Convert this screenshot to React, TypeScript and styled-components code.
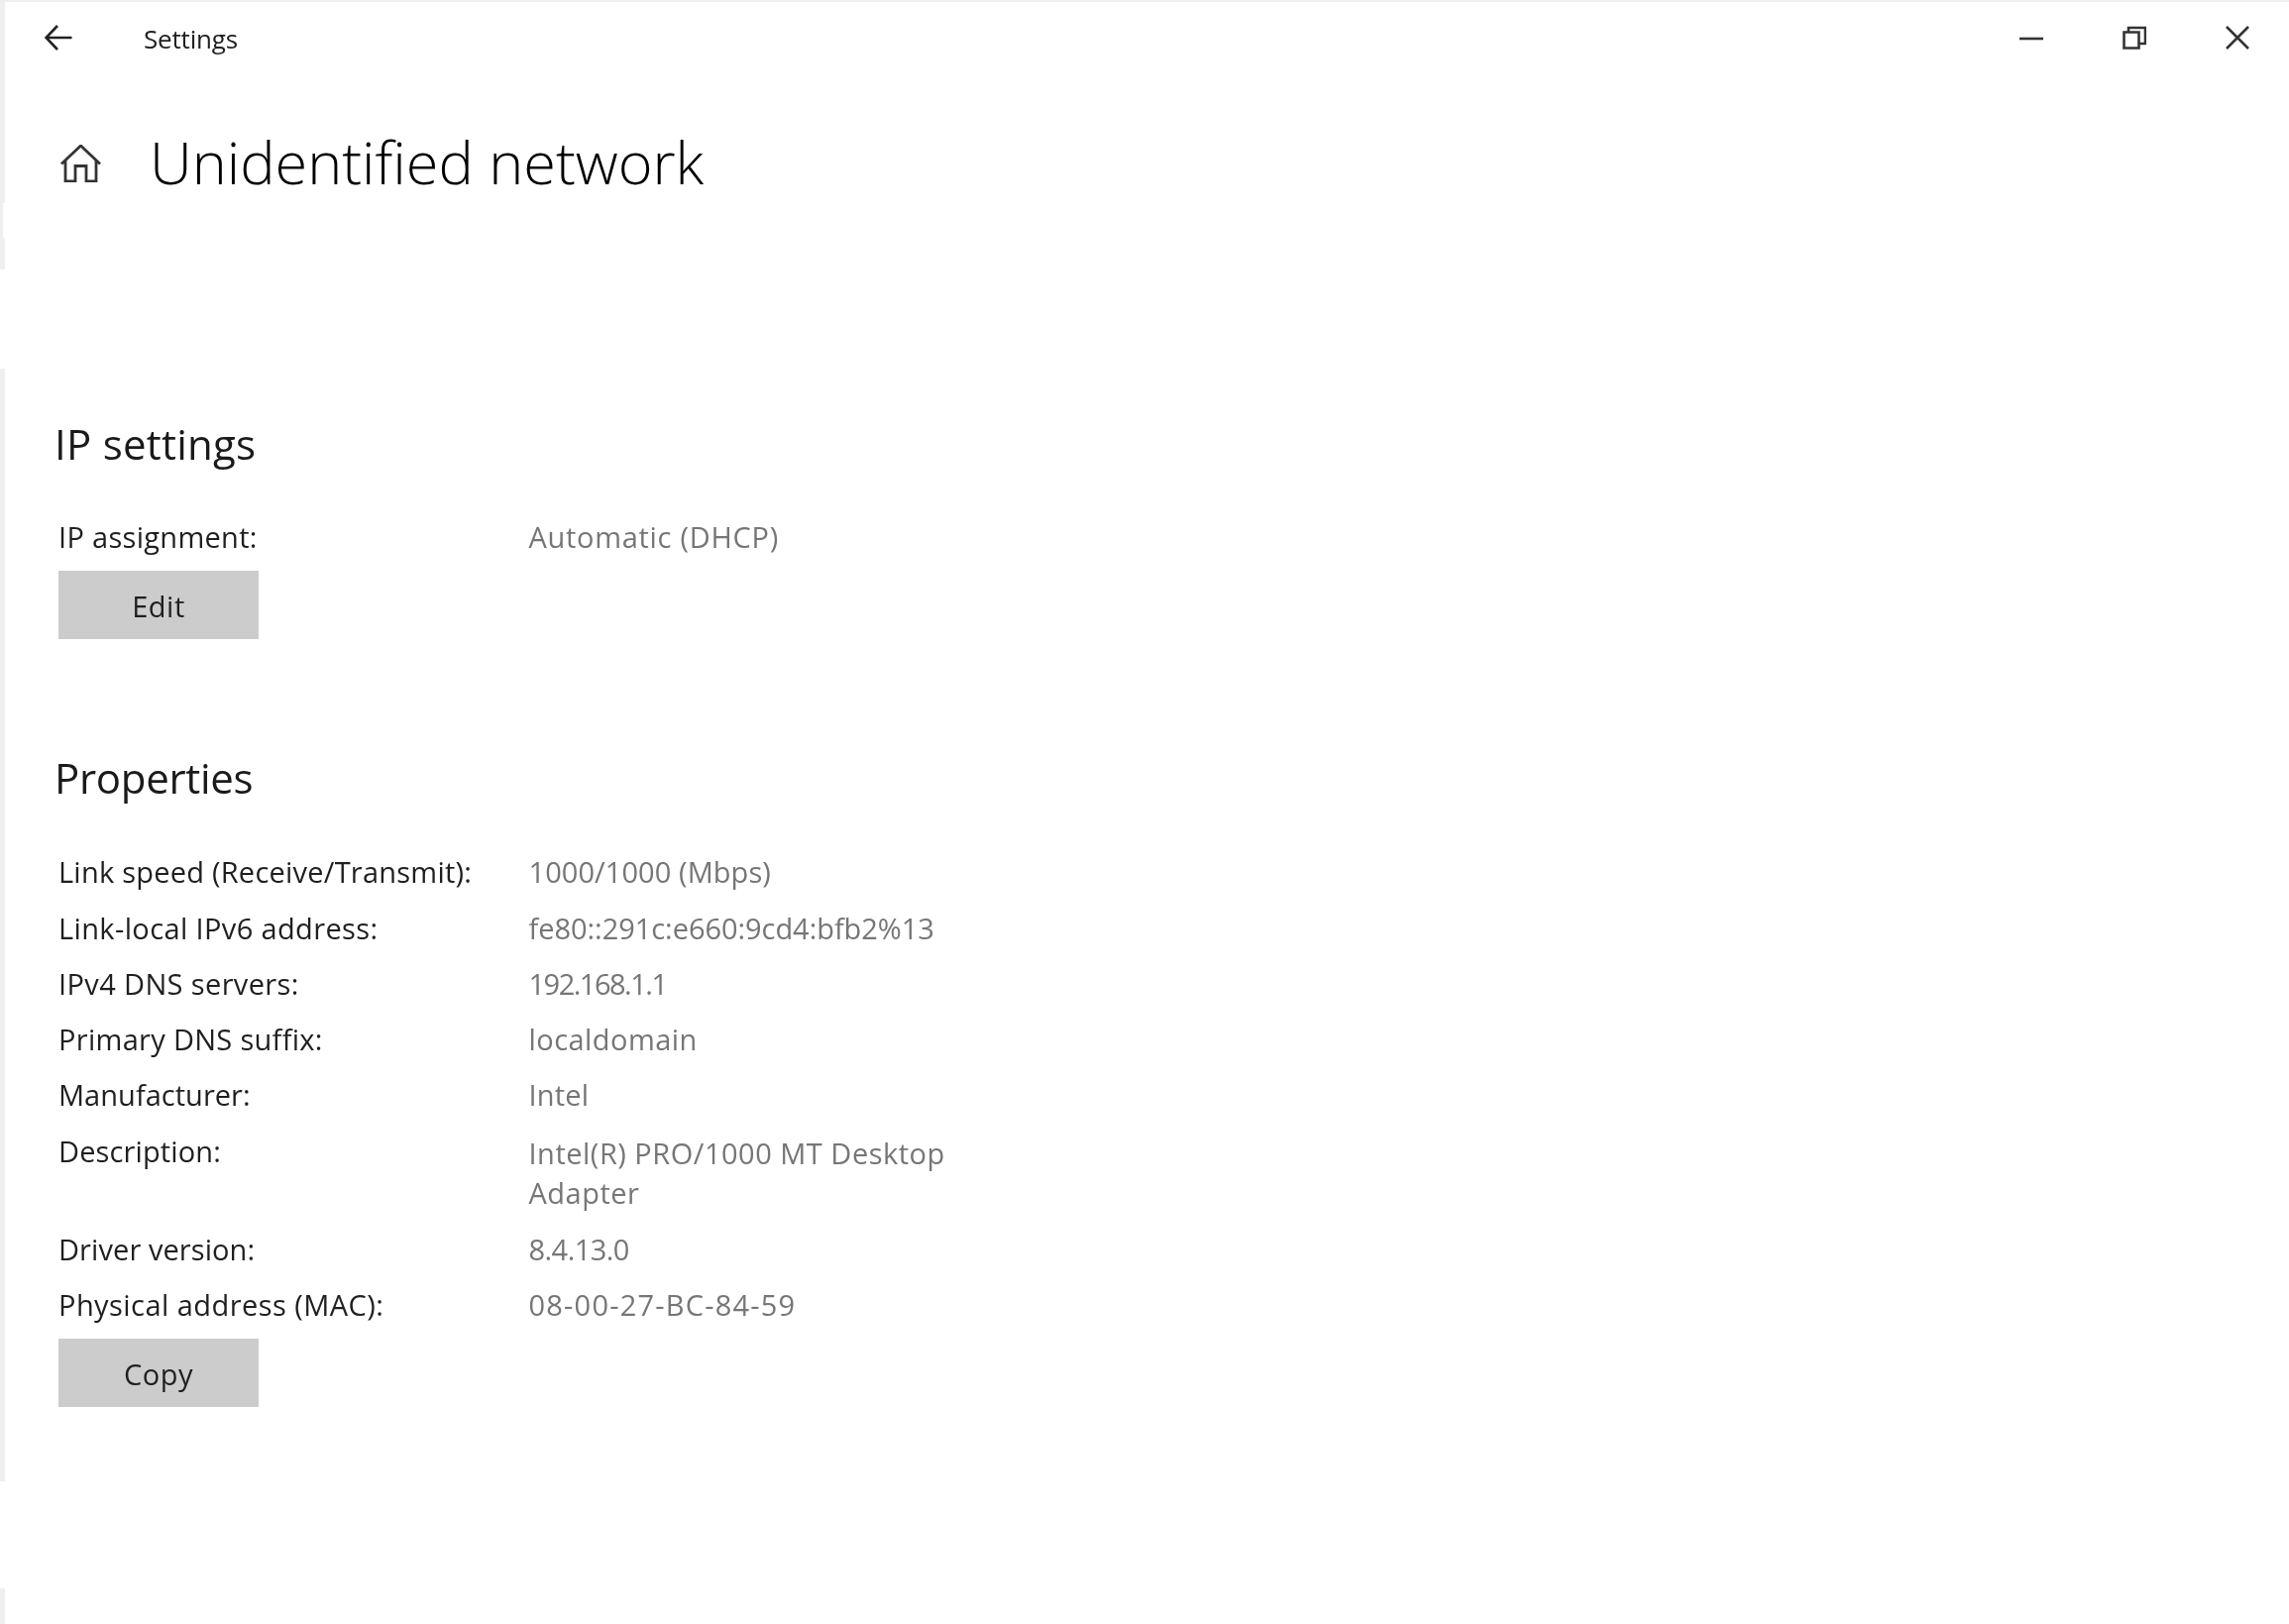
import React from 'react';
import styled, { createGlobalStyle } from 'styled-components';

const GlobalStyle = createGlobalStyle`
  html, body {
    margin: 0;
    padding: 0;
    background: #fff;
  }
  * {
    box-sizing: border-box;
  }
`;

const FONT = `"Open Sans", "Noto Sans", "Liberation Sans", sans-serif`;

const EDGE = [
  { height: 203, width: 5 },
  { height: 35, width: 3 },
  { height: 32, width: 5 },
  { height: 100, width: 0 },
  { height: 1123, width: 5 },
  { height: 108, width: 0 },
  { height: 36, width: 5 },
];

// tracking: Open Sans digits and capitals run wider or narrower than the original face
const ipRows = [{ label: 'IP assignment:', tracking: 0.3, value: 'Automatic (DHCP)', valueTracking: 0.7 }];

const propertyRows = [
  { label: 'Link speed (Receive/Transmit):', tracking: 0.23, value: '1000/1000 (Mbps)', valueTracking: 0.07 },
  { label: 'Link-local IPv6 address:', tracking: 0.37, value: 'fe80::291c:e660:9cd4:bfb2%13', valueTracking: -0.05 },
  { label: 'IPv4 DNS servers:', tracking: 0.37, value: '192.168.1.1', valueTracking: -1.5 },
  { label: 'Primary DNS suffix:', tracking: 0.3, value: 'localdomain', valueTracking: 0.45 },
  { label: 'Manufacturer:', tracking: 0.03, value: 'Intel', valueTracking: 0.2 },
  { label: 'Description:', tracking: 0.13, value: 'Intel(R) PRO/1000 MT Desktop Adapter', valueTracking: 0.5, wrap: true },
  { label: 'Driver version:', tracking: 0.08, value: '8.4.13.0', valueTracking: -0.55 },
  { label: 'Physical address (MAC):', tracking: 0.44, value: '08-00-27-BC-84-59', valueTracking: 1.2 },
];

const App = () => {
  return (
    <Window>
      <GlobalStyle />
      <TopEdge />
      <Body>
        <EdgeColumn>
          {EDGE.map((seg, i) => (
            <EdgeSegment key={i} $height={seg.height} $width={seg.width} />
          ))}
        </EdgeColumn>
        <Main>
          <TitleBar>
            <BackIcon width="28" height="26" viewBox="0 0 28 26">
              <path d="M27.5 13H1.5M13 1L1.5 13L13 25" />
            </BackIcon>
            <AppName>Settings</AppName>
            <Controls>
              <ControlButton>
                <ControlIcon width="24" height="24" viewBox="0 0 24 24">
                  <path d="M0 13H24" />
                </ControlIcon>
              </ControlButton>
              <ControlButton>
                <ControlIcon width="24" height="24" viewBox="0 0 24 24">
                  <path d="M1.5 6.5H16.5V22.5H1.5Z" />
                  <path d="M6 6V2H23V18H17" />
                </ControlIcon>
              </ControlButton>
              <ControlButton>
                <ControlIcon width="24" height="24" viewBox="0 0 24 24">
                  <path d="M1 1L23 23M23 1L1 23" />
                </ControlIcon>
              </ControlButton>
            </Controls>
          </TitleBar>

          <Header>
            <HomeIcon width="41" height="38" viewBox="0 0 41 38">
              <path d="M1 19.5L20.5 1L40 19.5" />
              <path d="M5 16V37H15V21.5H26V37H36V16" />
            </HomeIcon>
            <PageTitle>Unidentified network</PageTitle>
          </Header>

          <FirstSection>
            <SectionTitle $tracking={0.25}>IP settings</SectionTitle>
            <InfoGrid>
              {ipRows.map((row) => (
                <React.Fragment key={row.label}>
                  <Label $tracking={row.tracking}>{row.label}</Label>
                  <Value $tracking={row.valueTracking}>{row.value}</Value>
                </React.Fragment>
              ))}
            </InfoGrid>
            <ActionButton>Edit</ActionButton>
          </FirstSection>

          <Section>
            <SectionTitle $gap={37} $tracking={-0.3}>
              Properties
            </SectionTitle>
            <InfoGrid>
              {propertyRows.map((row) => (
                <React.Fragment key={row.label}>
                  <Label $tracking={row.tracking}>{row.label}</Label>
                  <Value $tracking={row.valueTracking} $wrap={row.wrap}>
                    {row.value}
                  </Value>
                </React.Fragment>
              ))}
            </InfoGrid>
            <ActionButton>Copy</ActionButton>
          </Section>
        </Main>
      </Body>
    </Window>
  );
};

const Window = styled.div`
  width: 2310px;
  height: 1639px;
  overflow: hidden;
  background: #ffffff;
  font-family: ${FONT};
  color: #1a1a1a;
`;

const TopEdge = styled.div`
  height: 2px;
  background: #efefef;
`;

const Body = styled.div`
  display: flex;
  height: 1637px;
`;

const EdgeColumn = styled.div`
  display: flex;
  flex-direction: column;
  flex: 0 0 5px;
`;

const EdgeSegment = styled.div<{ $height: number; $width: number }>`
  height: ${(p) => p.$height}px;
  width: ${(p) => p.$width}px;
  background: #efefef;
`;

const Main = styled.main`
  flex: 1;
  min-width: 0;
  filter: blur(0.45px);
`;

const TitleBar = styled.header`
  display: flex;
  align-items: center;
  height: 72px;
  padding-left: 40px;
`;

const BackIcon = styled.svg`
  flex: none;
  fill: none;
  stroke: #222;
  stroke-width: 2.6;
`;

const AppName = styled.span`
  margin-left: 72px;
  padding-top: 2px;
  font-size: 26px;
  letter-spacing: -0.18px;
  color: #222;
`;

const Controls = styled.div`
  display: flex;
  margin-left: auto;
`;

const ControlButton = styled.div`
  display: flex;
  align-items: center;
  justify-content: center;
  width: 104px;
  height: 72px;
`;

const ControlIcon = styled.svg`
  fill: none;
  stroke: #333;
  stroke-width: 2.6;
`;

const Header = styled.div`
  display: flex;
  align-items: center;
  height: 80px;
  margin-top: 51px;
  padding-left: 56px;
`;

const HomeIcon = styled.svg`
  flex: none;
  fill: none;
  stroke: #333;
  stroke-width: 2.8;
`;

const PageTitle = styled.h1`
  margin: -4px 0 0 49px;
  font-size: 59.4px;
  font-weight: 300;
  line-height: 80px;
  color: #000;
`;

const Section = styled.section`
  margin-top: 110px;
  padding-left: 54px;
`;

const FirstSection = styled(Section)`
  margin-top: 213px;
`;

const SectionTitle = styled.h2<{ $gap?: number; $tracking: number }>`
  margin: 0 0 ${(p) => p.$gap ?? 36}px -4px;
  font-size: 42px;
  font-weight: 400;
  line-height: 60px;
  letter-spacing: ${(p) => p.$tracking}px;
  color: #1a1a1a;
`;

const InfoGrid = styled.div`
  display: grid;
  grid-template-columns: 474.5px 440px;
  width: 914.5px;
`;

const Label = styled.div<{ $tracking: number }>`
  font-size: 29px;
  line-height: 56.25px;
  letter-spacing: ${(p) => p.$tracking}px;
  color: #1f1f1f;
`;

const Value = styled.div<{ $wrap?: boolean; $tracking: number }>`
  font-size: 29px;
  line-height: ${(p) => (p.$wrap ? '40px' : '56.25px')};
  padding: ${(p) => (p.$wrap ? '10px 0 9px' : '0')};
  letter-spacing: ${(p) => p.$tracking}px;
  color: #767676;
`;

const ActionButton = styled.div`
  display: flex;
  align-items: center;
  justify-content: center;
  width: 202px;
  height: 69px;
  margin-top: 6px;
  padding-top: 2px;
  background: #cccccc;
  font-size: 29px;
  letter-spacing: 0.5px;
  color: #1f1f1f;
`;

export default App;
